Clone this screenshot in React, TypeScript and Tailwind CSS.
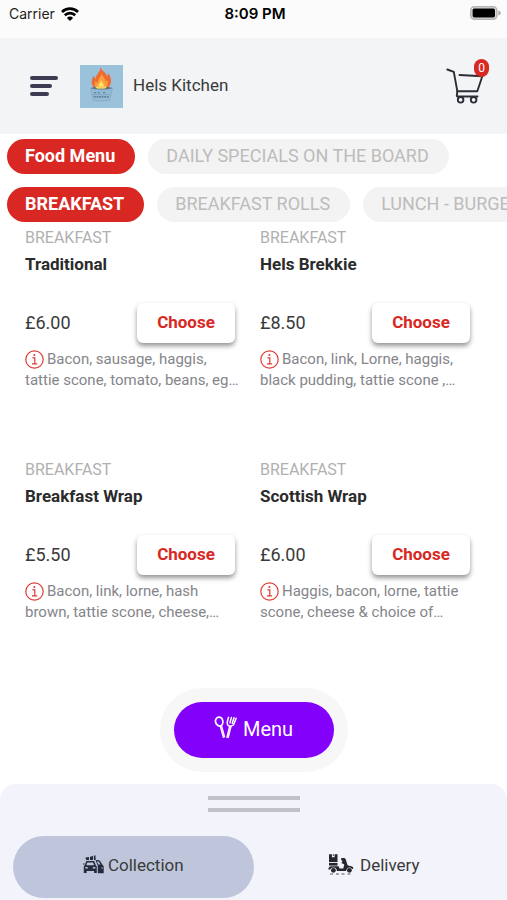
import React from "react";

type Item = { name: string; price: string; lines: [string, string] };

const menus = ["Food Menu", "DAILY SPECIALS ON THE BOARD"];
const categories = ["BREAKFAST", "BREAKFAST ROLLS", "LUNCH - BURGERS"];

const items: Item[] = [
  { name: "Traditional", price: "£6.00", lines: ["Bacon, sausage, haggis,", "tattie scone, tomato, beans, eg…"] },
  { name: "Hels Brekkie", price: "£8.50", lines: ["Bacon, link, Lorne, haggis,", "black pudding, tattie scone ,…"] },
  { name: "Breakfast Wrap", price: "£5.50", lines: ["Bacon, link, lorne, hash", "brown, tattie scone, cheese,…"] },
  { name: "Scottish Wrap", price: "£6.00", lines: ["Haggis, bacon, lorne, tattie", "scone, cheese & choice of…"] },
];

function WifiIcon() {
  return (
    <svg className="h-[14px] w-[18px]" viewBox="0 0 18 14" fill="none" stroke="#000" strokeWidth="2.700">
      <path d="M1 5a11.400 11.400 0 0 1 16 0" />
      <path d="M3.800 8.300a7.400 7.400 0 0 1 10.400 0" />
      <path d="M9 14 5.900 10.900a4.400 4.400 0 0 1 6.200 0Z" fill="#000" stroke="none" />
    </svg>
  );
}

function BatteryIcon() {
  return (
    <svg className="h-[14px] w-[31px]" viewBox="0 0 31 14">
      <rect x="0.8" y="0.8" width="26" height="12.4" rx="3.6" fill="#ddd" stroke="#b4b4b4" strokeWidth="1.5" />
      <rect x="2.6" y="2.6" width="22.4" height="8.8" rx="1.6" fill="#000" />
      <path d="M28.4 4.6c1.6.5 2.2 1.3 2.2 2.4s-.6 1.900-2.200 2.400Z" fill="#a6a6a6" />
    </svg>
  );
}

function CartIcon() {
  return (
    <svg className="h-[36px] w-[38px]" viewBox="0 0 38 36" fill="none" stroke="#2b2e34" strokeWidth="1.9" strokeLinecap="round" strokeLinejoin="round">
      <path d="M1.300 1.500 7.800 3.800 11.300 23.200H31.300L36.300 8.200 13.500 7" />
      <path d="M11.300 23.200 10.800 27.800q0 .7.800.7H31.500" />
      <circle cx="14.600" cy="31.800" r="2.800" />
      <circle cx="27.600" cy="31.800" r="2.800" />
    </svg>
  );
}

function Logo() {
  return (
    <svg className="h-[43px] w-[43px]" viewBox="0 0 43 43" role="img" aria-label="Hels Kitchen logo">
      <rect width="43" height="43" fill="#9ac2da" />
      <path d="M20.500 2c.8 3.600 5.500 5.200 6.600 9.200.7-1 .9-2 .8-3.200 3.600 4 4.300 9.500 1.300 13.400-1.300 1.500-3 2.300-5.200 2.600h-6c-4.300-.8-6.600-3.700-6.300-7.500.1-2.400 1-4.300 2.500-6 .1 1.700.6 2.800 1.500 3.600C15.300 9.500 20.300 7.500 20.500 2Z" fill="#ee6b32" />
      <path d="M21.400 7.500c.2 4.500 4.300 5 4 9.500.9-.5 1.300-1.300 1.500-2.300 2 3.500.8 7.800-3.200 9h-5.200c-4-1.200-4.600-4.600-2.800-7.700.5 1.100 1 1.700 1.900 2 0-4.100 4-5.500 3.800-10.500Z" fill="#f9a13a" />
      <path d="M21 14.500c.4 3 3.200 3.700 2.900 9h-5.800c-.5-4 2.800-5 2.900-9Z" fill="#fde26c" />
      <ellipse cx="21.500" cy="23.200" rx="10.800" ry="1.500" fill="#4f6476" />
      <ellipse cx="21" cy="22.500" rx="5.500" ry="1.300" fill="#fbd35c" />
      <path d="M10.700 23.500 13.300 35.200q8.200 1.800 16.400 0l2.600-11.700q-10.800 2.600-21.600 0Z" fill="#93bbd6" stroke="#7f9fb8" strokeWidth=".6" />
      <path d="M14 27.800h3m1 0h2m3 0h3M13.800 31.900h15" stroke="#56738d" strokeWidth="1.100" strokeDasharray="2 .6" />
      <path d="M12.500 29.600h18" stroke="#7697b2" strokeWidth=".5" />
    </svg>
  );
}

function InfoIcon() {
  return (
    <svg className="mr-[3px] inline-block h-[19px] w-[19px] align-[-5px]" viewBox="0 0 19 19" fill="none" stroke="#dc3b35" strokeWidth="1.200">
      <circle cx="9.500" cy="9.500" r="8.700" />
      <path d="M7.400 7.800h2.400v6M7 13.900h5.200" />
      <circle cx="9.400" cy="5" r="1" fill="#dc3b35" stroke="none" />
    </svg>
  );
}

function CutleryIcon() {
  return (
    <svg className="h-[23px] w-[23px]" viewBox="0 0 23 23" fill="none" stroke="#fff" strokeWidth="1.700" strokeLinecap="round" strokeLinejoin="round">
      <path d="M1.800 3.300C3 .6 6.500.4 8 2.800 9.400 5.200 9.200 8.600 7 9.700 4 11.100.3 6.800 1.800 3.300Z" />
      <path d="M6.200 10.200 9.300 21.300M7.600 9.800 10.600 20.900" strokeWidth="1.300" />
      <path d="M14.500 1.300 13.200 6.300q-.1 3.800 3 3.900 3.400-.2 4.300-3.600L22.100 2.200M17.400 1.400 16 6.800M20 1.800 18.300 7.200" strokeWidth="1.500" />
      <path d="M15.600 10.200 12.900 21.300M17.100 10.200 14.300 21.300" strokeWidth="1.300" />
    </svg>
  );
}

function CarsIcon() {
  return (
    <svg className="h-[19px] w-[21px]" viewBox="0 0 21 19" fill="#252b3d">
      <path d="M2.500 2.500 6 2v3H3Zm4.500-.7 3-.8v4H7ZM10.800.8l1.600-.5.3 4.700h-1.700Z" />
      <path fillRule="evenodd" d="M3.300 6h7.900l1.600 4.200 1 1v6.800h-2.700v-2H3.600v2H.8v-6.800l1-1ZM4.300 7.400l-1 2.800h7.800l-1-2.800ZM2.300 12v1.600h2.900L4.400 12Zm8 0-.8 1.600h2.900V12Z" />
      <path d="M0 8.400h1.700v1.200H0Z" />
      <path d="M12.500 5.200q2.800-.8 4.400.6l2.400 3.700 1.400 1.700v7h-5.900v-7.500Zm1.300 1.300 1.700 3h2l-1.900-3Z" fillRule="evenodd" />
      <path d="M18.300 12.500h1.500v1.100h-1.500Z" fill="#bfc6dc" />
    </svg>
  );
}

function ScooterIcon() {
  return (
    <svg className="h-[21px] w-[26px]" viewBox="0 0 26 21" fill="#25272c">
      <path fillRule="evenodd" d="M1 .3h8.500v7.800H1Zm2.900 0v2.900h2.700V.3Z" />
      <path d="M4.800.3h.9v1.800h-.9Z" />
      <path d="M1 8.900h8.500v2.700H1Z" />
      <path d="M.3 15.600q.3-3.300 3.200-3.300h7.200l.8 2.300h3.800l1-4.200-2.800-1.500 1.100-2.200-1.400-.4V3.900h2.900q1.300 0 1.700 1.500l1.600 5.400q.8 1.200 3.200 1.200 2.600.4 2.900 2.700l-1.500.3q-.8-1.400-2.600-1.400-2.700.1-3.300 3.300H8.900q-.5-3.300-3.500-3.300-2.400 0-3.300 2Z" />
      <circle cx="5.400" cy="16.300" r="2.400" />
      <circle cx="21.400" cy="16.300" r="2.400" />
      <path d="M2 19.600h3v.8H2Zm6 0h3v.8H8Zm5.500 0h3v.8h-3Zm6 0h3v.8h-3Z" opacity=".75" />
    </svg>
  );
}

function PillRow({ label, names }: { label: string; names: string[] }) {
  return (
    <nav aria-label={label} className="flex gap-[13px] overflow-x-auto pl-[7px] [scrollbar-width:none]">
      {names.map((name, i) => (
        <button
          key={name}
          type="button"
          className={
            i === 0
              ? "h-[35px] shrink-0 rounded-full bg-[#d92823] pr-5 pb-[2px] pl-[18px] text-[18px] leading-[33px] font-bold whitespace-nowrap text-white"
              : "h-[35px] shrink-0 rounded-full bg-[#f3f3f3] pr-5 pb-[2px] pl-[18px] text-[18px] leading-[33px] whitespace-nowrap text-[#bcbcbc]"
          }
        >
          {name}
        </button>
      ))}
    </nav>
  );
}

function ItemCard({ item }: { item: Item }) {
  return (
    <article>
      <p className="text-[16px] leading-[26px] text-[#b0b0b0]">BREAKFAST</p>
      <h2 className="text-[17px] leading-[27px] font-bold text-[#2b2b2b]">{item.name}</h2>
      <div className="mt-[25px] flex h-10 items-center justify-between">
        <span className="pb-[2px] text-[18px] text-[#3a3a3a]">{item.price}</span>
        <button
          type="button"
          className="h-10 w-[98px] rounded-md bg-white text-[17px] font-bold text-[#d92823] shadow-[0_3px_5px_rgba(0,0,0,0.42)]"
        >
          Choose
        </button>
      </div>
      <p className="mt-[6px] text-[15px] leading-[21px] whitespace-nowrap text-[#85858a]">
        <InfoIcon />
        {item.lines[0]}
        <br />
        {item.lines[1]}
      </p>
    </article>
  );
}

export default function App() {
  return (
    <div className="flex min-h-screen flex-col bg-white font-[Roboto,sans-serif] text-[#3a3a3a]">
      <div className="grid h-[38px] grid-cols-3 items-start bg-[#fbfbfb] pt-[4px] pr-[6px] pl-[9px] font-[Inter,sans-serif] text-[14px] leading-5 text-black">
        <div className="flex items-center gap-[6px]">
          <span className="text-[#222]">Carrier</span>
          <WifiIcon />
        </div>
        <span className="text-center text-[15px] leading-5 font-semibold whitespace-nowrap">8:09 PM</span>
        <div className="flex h-[18px] items-center justify-end">
          <BatteryIcon />
        </div>
      </div>

      <header className="flex h-24 items-center bg-[#f2f4f6] pr-[23px] pl-[30px]">
        <button type="button" aria-label="Open menu" className="flex w-[28px] flex-col gap-1">
          <span className="h-1 w-[28px] rounded-full bg-[#3c3b51]" />
          <span className="h-1 w-[22px] rounded-full bg-[#3c3b51]" />
          <span className="h-1 w-[19px] rounded-full bg-[#3c3b51]" />
        </button>
        <div className="ml-[22px]">
          <Logo />
        </div>
        <h1 className="ml-[10px] text-[17px]">Hels Kitchen</h1>
        <button type="button" aria-label="Basket" className="relative ml-auto">
          <CartIcon />
          <span className="absolute -top-[9px] -right-[5px] flex h-[18px] w-[15px] items-center justify-center rounded-full bg-[#d92823] text-[12px] text-white">
            0
          </span>
        </button>
      </header>

      <div className="flex flex-col gap-[13px] pt-[5px]">
        <PillRow label="Menus" names={menus} />
        <PillRow label="Categories" names={categories} />
      </div>

      <main className="mt-[3px] mb-6 grid grid-cols-2 gap-x-[25px] gap-y-[66px] pr-[37px] pl-[25px]">
        {items.map((item) => (
          <ItemCard key={item.name} item={item} />
        ))}
      </main>

      <div className="mt-auto mb-3 flex justify-center">
        <div className="rounded-full bg-[#f7f7f7] p-[14px]">
          <button
            type="button"
            className="flex h-14 w-[160px] items-center justify-center gap-[6px] rounded-full bg-[#8300fa] pb-[2px] text-[20px] text-white"
          >
            <span className="pb-1">
              <CutleryIcon />
            </span>
            Menu
          </button>
        </div>
      </div>

      <footer className="rounded-t-2xl bg-[#f2f3fb] pt-3 pb-[2px]">
        <div className="mx-auto flex w-[92px] flex-col gap-2">
          <span className="h-1 bg-[#c1c2c8]" />
          <span className="h-1 bg-[#c1c2c8]" />
        </div>
        <div className="mt-6 grid grid-cols-2 px-[13px]">
          <button
            type="button"
            className="flex h-[62px] items-center justify-center gap-1 rounded-full bg-[#bfc6dc] pb-[2px] text-[17px]"
          >
            <span className="pb-1">
              <CarsIcon />
            </span>
            Collection
          </button>
          <button type="button" className="flex h-[62px] items-center justify-center gap-[6px] pb-[2px] text-[17px]">
            <span className="pb-1">
              <ScooterIcon />
            </span>
            Delivery
          </button>
        </div>
      </footer>
    </div>
  );
}
